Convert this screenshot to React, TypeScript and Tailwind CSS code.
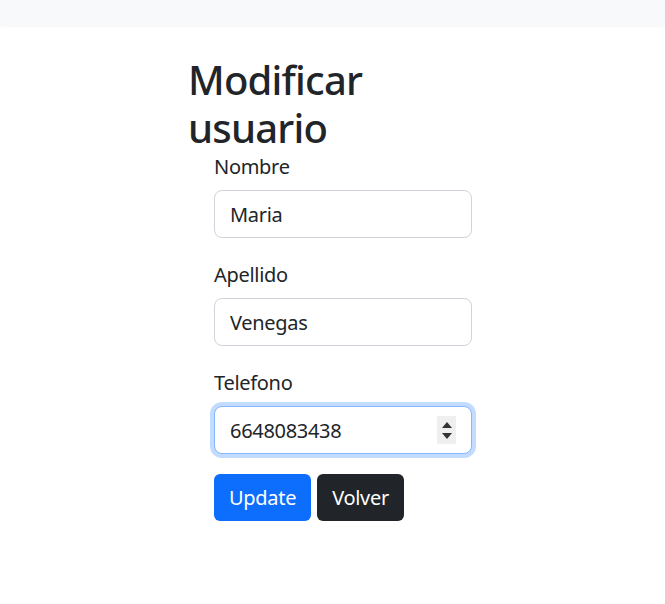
import React, { useState } from 'react';

const font = { fontFamily: '"Noto Sans", "Open Sans", sans-serif' };

const Field = ({
  label,
  value,
  onChange,
  focused,
  spinner,
}: {
  label: string;
  value: string;
  onChange: (v: string) => void;
  focused?: boolean;
  spinner?: boolean;
}) => (
  <div className="mb-[22px]">
    <label className="block text-[20px] leading-[30px] mb-2 text-[#212529]">{label}</label>
    <div className="relative">
      <input
        type="text"
        value={value}
        onChange={(e) => onChange(e.target.value)}
        className={`block w-full h-[48px] px-[15px] text-[20px] tracking-[-0.3px] text-[#212529] bg-white rounded-lg border outline-none ${
          focused
            ? 'border-[#86b7fe] shadow-[0_0_0_4px_rgba(13,110,253,0.25)]'
            : 'border-[#ced4da]'
        }`}
        style={font}
      />
      {spinner && (
        <div className="absolute right-[16px] top-[10px] w-[19px] h-[28px] bg-[#efefef] flex flex-col items-center justify-center gap-[5px]">
          <svg width="10" height="6" viewBox="0 0 10 6">
            <path d="M5 0 L10 6 L0 6 Z" fill="#333" />
          </svg>
          <svg width="10" height="6" viewBox="0 0 10 6">
            <path d="M0 0 L10 0 L5 6 Z" fill="#333" />
          </svg>
        </div>
      )}
    </div>
  </div>
);

const App = () => {
  const [nombre, setNombre] = useState('Maria');
  const [apellido, setApellido] = useState('Venegas');
  const [telefono, setTelefono] = useState('6648083438');

  return (
    <div className="min-h-screen bg-white text-[#212529] tracking-[-0.3px]" style={font}>
      {/* Navbar */}
      <div className="h-[25px] bg-[#f8f9fa] shadow-[0_2px_2px_rgba(0,0,0,0.03)]" />

      <div className="ml-[188px] w-[310px] pt-[31px]">
        <h1 className="text-[40px] leading-[48px] font-medium tracking-[-0.8px] text-[#212529]">Modificar usuario</h1>

        <form className="px-[26px]" onSubmit={(e) => e.preventDefault()}>
          <Field label="Nombre" value={nombre} onChange={setNombre} />
          <Field label="Apellido" value={apellido} onChange={setApellido} />
          <div className="-mb-[2px]">
            <Field label="Telefono" value={telefono} onChange={setTelefono} focused spinner />
          </div>

          <div className="flex gap-[6px]">
            <button className="h-[47px] px-[15px] rounded-md bg-[#0d6efd] text-white text-[20px]">Update</button>
            <button type="button" className="h-[47px] px-[15px] rounded-md bg-[#212529] text-white text-[20px]">
              Volver
            </button>
          </div>
        </form>
      </div>
    </div>
  );
};

export default App;
